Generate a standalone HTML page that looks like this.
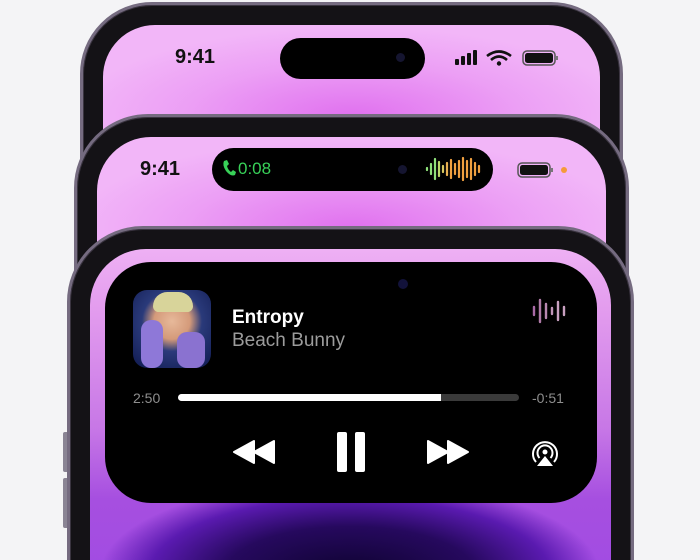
<!DOCTYPE html>
<html><head><meta charset="utf-8"><style>
*{margin:0;padding:0;box-sizing:border-box}
html,body{width:700px;height:560px;overflow:hidden}
body{background:#f4f4f6;position:relative;font-family:"Liberation Sans",sans-serif}
.ab{position:absolute}
.rim{position:absolute;background:#141216;border:3px solid #756b80;box-shadow:inset 0 0 0 1px #3a3440}
.scr{position:absolute;overflow:hidden}
.isl{position:absolute;background:#000}
.t{position:absolute;font-weight:bold;color:#111;font-size:20px}
</style></head><body>
<!-- phone 1 -->
<div class="rim" style="left:80px;top:2px;width:543px;height:200px;border-radius:72px 72px 0 0"></div>
<div class="scr" style="left:103px;top:25px;width:497px;height:160px;border-radius:52px 52px 0 0;background:radial-gradient(ellipse 280px 90px at 250px 92px,#e070ef,#ec9ff5 60%,#f2b6f8)"></div>
<div class="t" style="left:175px;top:46px">9:41</div>
<div class="isl" style="left:280px;top:38px;width:145px;height:41px;border-radius:21px"></div>
<div class="ab" style="left:396px;top:53px;width:9px;height:9px;border-radius:50%;background:#151530"></div>
<svg class="ab" style="left:455px;top:49px" width="104" height="18" viewBox="0 0 104 18">
<rect x="0" y="10" width="4" height="6" rx="1" fill="#111"/><rect x="6" y="7" width="4" height="9" rx="1" fill="#111"/><rect x="12" y="4" width="4" height="12" rx="1" fill="#111"/><rect x="18" y="1" width="4" height="15" rx="1" fill="#111"/>
<path d="M32 7 Q44 -2 56 7" stroke="#111" stroke-width="2.6" fill="none"/><path d="M36 11 Q44 4 52 11" stroke="#111" stroke-width="2.6" fill="none"/><circle cx="44" cy="14.5" r="2.2" fill="#111"/>
<rect x="68" y="2" width="32" height="14" rx="4" fill="none" stroke="#555" stroke-width="1.5"/><rect x="70" y="4" width="28" height="10" rx="2.5" fill="#111"/><rect x="101" y="7" width="2" height="4" fill="#777"/>
</svg>
<!-- phone 2 -->
<div class="rim" style="left:74px;top:114px;width:555px;height:200px;border-radius:74px 74px 0 0"></div>
<div class="scr" style="left:97px;top:137px;width:509px;height:160px;border-radius:54px 54px 0 0;background:radial-gradient(ellipse 280px 90px at 255px 92px,#e070ef,#ec9ff5 60%,#f2b6f8)"></div>
<div class="t" style="left:140px;top:158px">9:41</div>
<div class="isl" style="left:212px;top:148px;width:281px;height:43px;border-radius:22px"></div>
<svg class="ab" style="left:221px;top:159px" width="16" height="18" viewBox="0 0 16 18"><path d="M3 2 L6 1 L8 5 L6 7 Q7 11 10 13 L12 11 L15 13 L14 16 Q10 18 5 12 Q1 6 3 2Z" fill="#38d158"/></svg>
<div class="ab" style="left:238px;top:159px;color:#38d158;font-size:17px">0:08</div>
<div class="ab" style="left:398px;top:165px;width:9px;height:9px;border-radius:50%;background:#151530"></div>
<svg class="ab" style="left:425px;top:156px" width="58" height="26" viewBox="0 0 58 26">
<g stroke-linecap="round" stroke-width="2.2">
<line x1="2" y1="12" x2="2" y2="14" stroke="#8ee07a"/><line x1="6" y1="8" x2="6" y2="18" stroke="#8ee07a"/><line x1="10" y1="3" x2="10" y2="23" stroke="#8ee07a"/><line x1="14" y1="6" x2="14" y2="20" stroke="#b8d86a"/><line x1="18" y1="10" x2="18" y2="16" stroke="#d8c860"/><line x1="22" y1="7" x2="22" y2="19" stroke="#e8b050"/><line x1="26" y1="4" x2="26" y2="22" stroke="#f0a040"/><line x1="30" y1="8" x2="30" y2="18" stroke="#f0a040"/><line x1="34" y1="5" x2="34" y2="21" stroke="#f0a040"/><line x1="38" y1="2" x2="38" y2="24" stroke="#f0a040"/><line x1="42" y1="5" x2="42" y2="21" stroke="#f0a040"/><line x1="46" y1="3" x2="46" y2="23" stroke="#f0a040"/><line x1="50" y1="7" x2="50" y2="19" stroke="#f0a040"/><line x1="54" y1="10" x2="54" y2="16" stroke="#f0a040"/>
</g></svg>
<svg class="ab" style="left:517px;top:161px" width="40" height="18" viewBox="0 0 40 18">
<rect x="1" y="2" width="32" height="14" rx="4" fill="none" stroke="#555" stroke-width="1.5"/><rect x="3" y="4" width="28" height="10" rx="2.5" fill="#111"/><rect x="34" y="7" width="2" height="4" fill="#777"/></svg>
<div class="ab" style="left:561px;top:167px;width:6px;height:6px;border-radius:50%;background:#f59a3a"></div>
<!-- phone 3 -->
<div class="ab" style="left:63px;top:432px;width:6px;height:40px;border-radius:2px;background:#8a8494"></div>
<div class="ab" style="left:63px;top:478px;width:6px;height:50px;border-radius:2px;background:#8a8494"></div>
<div class="rim" style="left:67px;top:226px;width:567px;height:340px;border-radius:76px 76px 0 0"></div>
<div class="scr" style="left:90px;top:249px;width:521px;height:320px;border-radius:56px 56px 0 0;background:linear-gradient(#eeb0f4 0,#e39cee 60px,#c777e6 180px,#a64fe0 250px,#a24ce2 320px)">
<div class="ab" style="left:0;top:230px;width:521px;height:90px;background:radial-gradient(ellipse 250px 95px at 260px 95px,#0e0330,#26095e 50%,#5a1ab0 80%,rgba(140,60,220,0) 100%)"></div>
</div>
<div class="isl" style="left:105px;top:262px;width:492px;height:241px;border-radius:46px"></div>
<div class="ab" style="left:398px;top:279px;width:10px;height:10px;border-radius:50%;background:#12123a"></div>
<div class="ab" style="left:133px;top:290px;width:78px;height:78px;border-radius:14px;overflow:hidden;background:radial-gradient(circle at 50% 40%,#e7b99a 0,#d49a7a 18px,#2a3a7a 30px,#101a50 60px)">
<div class="ab" style="left:20px;top:2px;width:40px;height:20px;border-radius:20px 20px 8px 8px;background:#d8d49a"></div>
<div class="ab" style="left:8px;top:30px;width:22px;height:48px;border-radius:10px;background:#8e78d8"></div>
<div class="ab" style="left:44px;top:42px;width:28px;height:36px;border-radius:10px;background:#8a72d0"></div>
</div>
<div class="ab" style="left:232px;top:307px;color:#fff;font-weight:bold;font-size:19px">Entropy</div>
<div class="ab" style="left:232px;top:330px;color:#9c9c9c;font-size:19px">Beach Bunny</div>
<svg class="ab" style="left:531px;top:297px" width="36" height="28" viewBox="0 0 36 28"><g stroke-linecap="round" stroke-width="2.4">
<line x1="3" y1="10" x2="3" y2="18" stroke="#a86aa6"/><line x1="9" y1="3" x2="9" y2="25" stroke="#b07aa8"/><line x1="15" y1="7" x2="15" y2="21" stroke="#b888b0"/><line x1="21" y1="11" x2="21" y2="17" stroke="#c094b8"/><line x1="27" y1="5" x2="27" y2="23" stroke="#c8a0c0"/><line x1="33" y1="10" x2="33" y2="18" stroke="#c8a0c0"/></g></svg>
<div class="ab" style="left:133px;top:390px;color:#8e8e8e;font-size:14px">2:50</div>
<div class="ab" style="left:178px;top:394px;width:341px;height:7px;border-radius:4px;background:#3a3a3a"></div>
<div class="ab" style="left:178px;top:394px;width:263px;height:7px;border-radius:4px 0 0 4px;background:#fff"></div>
<div class="ab" style="left:532px;top:390px;color:#8e8e8e;font-size:14px">-0:51</div>
<svg class="ab" style="left:232px;top:438px" width="44" height="28" viewBox="0 0 44 28"><path d="M22 3 L22 25 L2 14Z M42 3 L42 25 L22 14Z" fill="#fff" stroke="#fff" stroke-width="2" stroke-linejoin="round"/></svg>
<div class="ab" style="left:337px;top:432px;width:10px;height:40px;border-radius:2px;background:#fff"></div>
<div class="ab" style="left:355px;top:432px;width:10px;height:40px;border-radius:2px;background:#fff"></div>
<svg class="ab" style="left:426px;top:438px" width="44" height="28" viewBox="0 0 44 28"><path d="M2 3 L2 25 L22 14Z M22 3 L22 25 L42 14Z" fill="#fff" stroke="#fff" stroke-width="2" stroke-linejoin="round"/></svg>
<svg class="ab" style="left:529px;top:437px" width="32" height="32" viewBox="0 0 32 32"><g fill="none" stroke="#fff" stroke-width="2">
<path d="M7 25 A12 12 0 1 1 25 25"/><path d="M10.5 21 A7.5 7.5 0 1 1 21.5 21"/></g><circle cx="16" cy="15" r="2.5" fill="#fff"/><path d="M16 19 L24 29 L8 29Z" fill="#fff"/></svg>
</body></html>
